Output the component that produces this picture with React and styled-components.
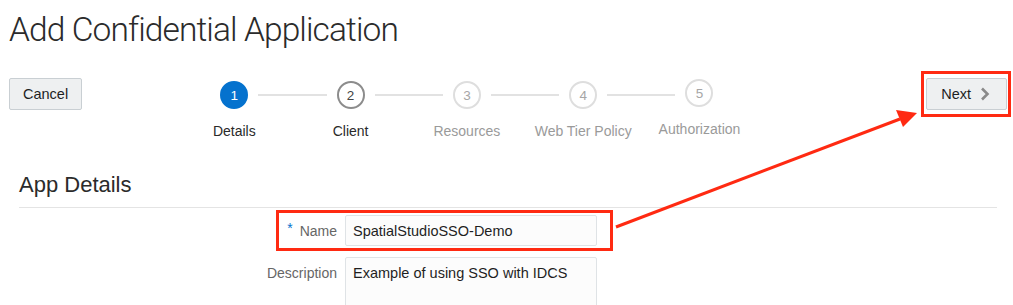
import React from 'react';
import styled, { createGlobalStyle } from 'styled-components';

// Global
const GlobalStyle = createGlobalStyle`
    html, body {
        margin: 0;
        padding: 0;
        background: #ffffff;
        font-family: "Liberation Sans", Arial, sans-serif;
        color: #222;
    }
`;

// Styled Components
const Page = styled.div`
    position: relative;
    width: 1013px;
    height: 305px;
    overflow: hidden;
    padding: 0 6px 0 9px;
    box-sizing: border-box;
`;

const Title = styled.h1`
    margin: 0;
    padding-top: 8px;
    font-family: Roboto, "Liberation Sans", sans-serif;
    font-weight: 300;
    font-size: 33.5px;
    line-height: 44px;
    letter-spacing: -0.9px;
    color: #2b2b2b;
`;

const TopRow = styled.div`
    display: flex;
    align-items: flex-start;
    margin-top: 26px;
`;

const Button = styled.button`
    display: flex;
    align-items: center;
    height: 32px;
    padding: 0 13px;
    background: #eef0f1;
    border: 1px solid #c9cfd3;
    border-radius: 2px;
    font-family: "Liberation Sans", Arial, sans-serif;
    font-size: 14.5px;
    color: #1f1f1f;
    cursor: pointer;
`;

const Stepper = styled.div`
    display: flex;
    margin-left: 94px;
    margin-top: 3px;
`;

const Step = styled.div`
    display: flex;
    flex-direction: column;
    align-items: center;
    width: 116.3px;
`;

const CircleRow = styled.div`
    display: flex;
    align-items: center;
    width: 100%;
`;

const Connector = styled.div`
    flex: 1;
    height: 2px;
    background: ${p => (p.$hidden ? 'transparent' : '#e2e2e2')};
    margin: ${p => (p.$side === 'left' ? '0 10px 0 0' : '0 0 0 10px')};
`;

const Circle = styled.div`
    width: 28px;
    height: 28px;
    box-sizing: border-box;
    border-radius: 50%;
    display: flex;
    align-items: center;
    justify-content: center;
    font-size: 13.5px;
    background: ${p => (p.$state === 'active' ? '#0572ce' : '#fff')};
    color: ${p => (p.$state === 'active' ? '#fff' : p.$state === 'next' ? '#444' : '#a6a6a6')};
    border: 2px solid ${p => (p.$state === 'active' ? '#0572ce' : p.$state === 'next' ? '#8c8c8c' : '#dedede')};
    transform: translateY(${p => (p.$lift ? '-2px' : '0')});
`;

const StepLabel = styled.div`
    margin-top: 14px;
    font-size: 14px;
    color: ${p => (p.$muted ? '#9a9a9a' : '#2a2a2a')};
    white-space: nowrap;
    transform: translateY(${p => (p.$lift ? '-2px' : '0')});
`;

const NextButton = styled(Button)`
    margin-left: auto;
    padding: 0 16px 0 14px;
    gap: 9px;
`;

const Section = styled.section`
    margin: 33px 10px 0 10px;
`;

const SectionTitle = styled.h2`
    margin: 0;
    font-family: "Liberation Sans", Arial, sans-serif;
    font-weight: 400;
    font-size: 22px;
    line-height: 26px;
    color: #2b2b2b;
    padding-bottom: 9px;
    border-bottom: 1px solid #e4e4e4;
`;

const Form = styled.div`
    display: flex;
    flex-direction: column;
    gap: 11px;
    margin-top: 7px;
`;

const FormRow = styled.div`
    display: grid;
    grid-template-columns: 318px 252px;
    column-gap: 8px;
    align-items: ${p => (p.$top ? 'start' : 'center')};
`;

const Label = styled.label`
    text-align: right;
    font-size: 14px;
    color: #666;
    padding-top: ${p => (p.$top ? '8px' : '0')};
`;

const Required = styled.span`
    color: #0572ce;
    margin-right: 7px;
    position: relative;
    top: -3px;
`;

const Field = styled.div`
    box-sizing: border-box;
    height: ${p => p.$height || 31}px;
    padding: ${p => (p.$area ? '7px 7px' : '0 7px')};
    display: flex;
    align-items: ${p => (p.$area ? 'flex-start' : 'center')};
    background: #fcfcfc;
    border: 1px solid #dfe3e6;
    border-radius: 2px;
    font-size: 14.5px;
    color: #1f1f1f;
`;

const Overlay = styled.svg`
    position: absolute;
    left: 0;
    top: 0;
    pointer-events: none;
`;

const Chevron = () => (
    <svg width="10" height="14" viewBox="0 0 10 14">
        <path d="M2 1.5 L7.5 7 L2 12.5" fill="none" stroke="#8a8a8a" strokeWidth="2.6" />
    </svg>
);

const steps = [
    { n: 1, label: 'Details', state: 'active' },
    { n: 2, label: 'Client', state: 'next' },
    { n: 3, label: 'Resources', state: 'todo' },
    { n: 4, label: 'Web Tier Policy', state: 'todo' },
    { n: 5, label: 'Authorization', state: 'todo', lift: true },
];

const App = () => (
    <>
        <GlobalStyle />
        <Page>
            <Title>Add Confidential Application</Title>
            <TopRow>
                <Button>Cancel</Button>
                <Stepper>
                    {steps.map((s, i) => (
                        <Step key={s.n}>
                            <CircleRow>
                                <Connector $side="left" $hidden={i === 0} />
                                <Circle $state={s.state} $lift={s.lift}>{s.n}</Circle>
                                <Connector $side="right" $hidden={i === steps.length - 1} />
                            </CircleRow>
                            <StepLabel $muted={s.state === 'todo'} $lift={s.lift}>{s.label}</StepLabel>
                        </Step>
                    ))}
                </Stepper>
                <NextButton>
                    Next <Chevron />
                </NextButton>
            </TopRow>
            <Section>
                <SectionTitle>App Details</SectionTitle>
                <Form>
                    <FormRow>
                        <Label><Required>*</Required>Name</Label>
                        <Field>SpatialStudioSSO-Demo</Field>
                    </FormRow>
                    <FormRow $top>
                        <Label $top>Description</Label>
                        <Field $area $height={60}>Example of using SSO with IDCS</Field>
                    </FormRow>
                </Form>
            </Section>
            <Overlay width="1013" height="305" viewBox="0 0 1013 305">
                <rect x="277.5" y="211.5" width="334" height="38" fill="none" stroke="#ff2a12" strokeWidth="3" />
                <rect x="922.5" y="72.5" width="87" height="43" fill="none" stroke="#ff2a12" strokeWidth="3" />
                <line x1="616" y1="227" x2="900" y2="119" stroke="#ff2a12" strokeWidth="3" />
                <polygon points="917,113 896,110 903,127" fill="#ff2a12" />
            </Overlay>
        </Page>
    </>
);

export default App;
